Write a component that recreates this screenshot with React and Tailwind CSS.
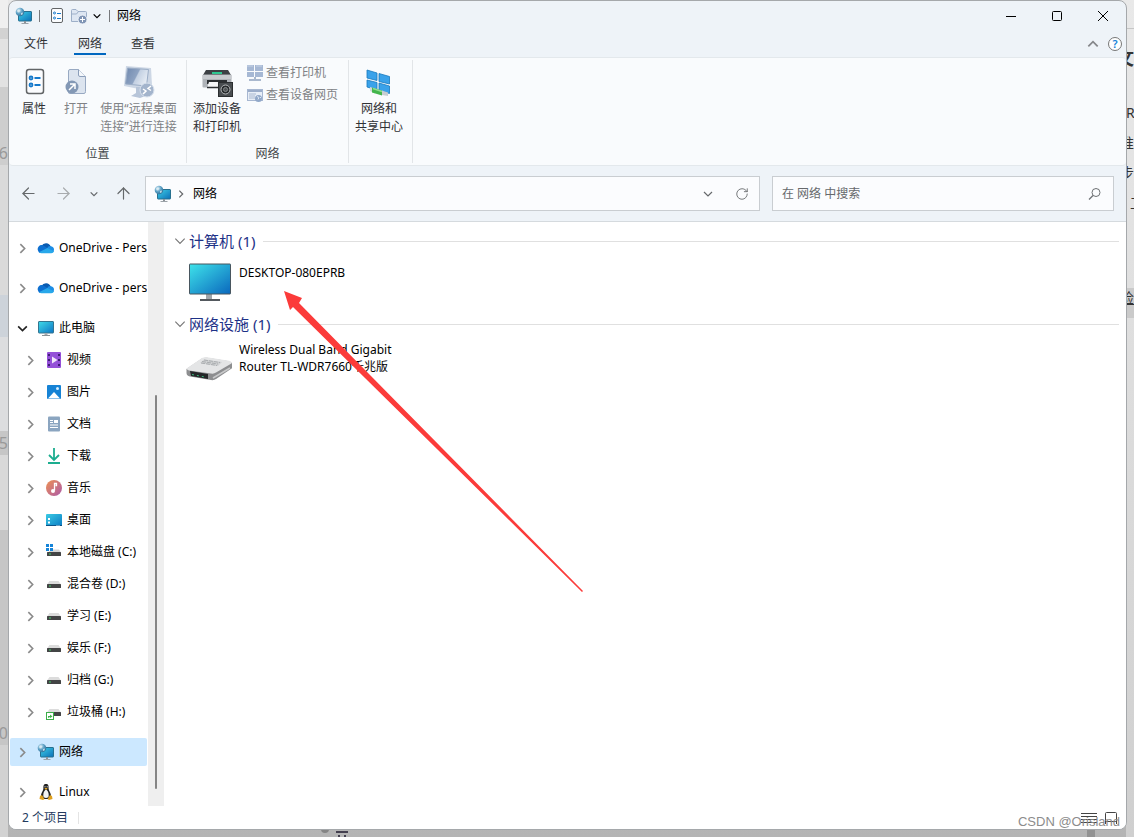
import React from 'react';
import { ArrowLeft, ArrowRight, ArrowUp, RotateCw } from 'lucide-react';

const treeItems = [
    { label: "OneDrive - Personal", icon: CloudIcon, level: 0, pad: "py-1.5" },
    { label: "OneDrive - personal", icon: CloudIcon, level: 0, pad: "py-1.5" },
    { label: "此电脑", icon: PcIcon, level: 0, open: true, pad: "pt-1.5 pb-0.5" },
    { label: "视频", icon: VideoIcon, level: 1 },
    { label: "图片", icon: PictureIcon, level: 1 },
    { label: "文档", icon: DocIcon, level: 1 },
    { label: "下载", icon: DownloadIcon, level: 1 },
    { label: "音乐", icon: MusicIcon, level: 1 },
    { label: "桌面", icon: DesktopIcon, level: 1 },
    { label: "本地磁盘 (C:)", icon: SystemDriveIcon, level: 1 },
    { label: "混合卷 (D:)", icon: DriveIcon, level: 1 },
    { label: "学习 (E:)", icon: DriveIcon, level: 1 },
    { label: "娱乐 (F:)", icon: DriveIcon, level: 1 },
    { label: "归档 (G:)", icon: DriveIcon, level: 1 },
    { label: "垃圾桶 (H:)", icon: LinkedDriveIcon, level: 1 },
    { label: "网络", icon: NetworkIcon, level: 0, selected: true, pad: "pt-2.5 pb-1.5" },
    { label: "Linux", icon: LinuxIcon, level: 0, pad: "pt-1.5" },
];

const sections = [
    { title: "计算机 (1)", lines: ["DESKTOP-080EPRB"], icon: ComputerIcon, textClass: "pt-1.5" },
    { title: "网络设施 (1)", lines: ["Wireless Dual Band Gigabit", "Router TL-WDR7660千兆版"], icon: RouterIcon, textClass: "pt-0" },
];

const chevronPaths = {
    right: "M4 2l4 4-4 4",
    down: "M2 4l4 4 4-4",
    up: "M2 8l4-4 4 4",
};

function Chevron({ dir, size = 12, width = 1.5, className = "" }) {
    return (
        <svg width={size} height={size} viewBox="0 0 12 12" fill="none" stroke="currentColor" strokeWidth={width} className={`shrink-0 ${className}`}>
            <path d={chevronPaths[dir]} />
        </svg>
    );
}

function NetworkIcon() {
    return (
        <svg width="18" height="18" viewBox="0 0 18 18" className="shrink-0">
            <defs>
                <linearGradient id="net" x1="0" y1="0" x2="1" y2="1">
                    <stop offset="0" stopColor="#3fd0e6" />
                    <stop offset="1" stopColor="#0b6fb8" />
                </linearGradient>
                <radialGradient id="globe" cx="0.35" cy="0.3" r="0.8">
                    <stop offset="0" stopColor="#d5eaf5" />
                    <stop offset="0.5" stopColor="#5b9fc4" />
                    <stop offset="1" stopColor="#28688f" />
                </radialGradient>
            </defs>
            <rect x="3.5" y="4.5" width="13" height="9.5" rx="0.5" fill="url(#net)" stroke="#27708f" />
            <path d="M10 14v2" stroke="#8b9299" strokeWidth="2" />
            <path d="M6.5 16.5h7" stroke="#9ca3a9" />
            <circle cx="5" cy="5" r="4.3" fill="url(#globe)" />
            <path d="M2 3.5l2-1 1.5 1L4 5.5 2.5 5zM6 6l2-.5-.5 2L6 8z" fill="#dcecf3" opacity="0.8" />
        </svg>
    );
}

function PcIcon() {
    return (
        <svg width="18" height="18" viewBox="0 0 18 18" className="shrink-0">
            <defs>
                <linearGradient id="pc" x1="0" y1="0" x2="1" y2="1">
                    <stop offset="0" stopColor="#3fdbe8" />
                    <stop offset="1" stopColor="#0d74c4" />
                </linearGradient>
            </defs>
            <rect x="1.5" y="2.5" width="15" height="11.5" rx="0.5" fill="url(#pc)" stroke="#34758f" />
            <path d="M9 14v2" stroke="#a5abb0" strokeWidth="3" />
            <path d="M5 16.5h8" stroke="#8a9196" />
        </svg>
    );
}

function CloudIcon() {
    return (
        <svg width="18" height="18" viewBox="0 0 18 18" className="shrink-0">
            <path d="M4.5 7A5 5 0 0 1 13.7 7.5L9 11z" fill="#0a5bb0" />
            <path d="M1.2 12A4 4 0 0 1 6 6.3L12 10 3 14Q1.5 13.5 1.2 12z" fill="#0d6fd0" />
            <path d="M10 9.5A3.6 3.6 0 0 1 17 10.8L16.5 13 11 12z" fill="#1b8de6" />
            <path d="M2 13.3L10.3 9l6.6 3.2Q16.5 14.2 14.3 14.2H4.5Q3 14.2 2 13.3z" fill="#28a8ea" />
        </svg>
    );
}

function VideoIcon() {
    return (
        <svg width="18" height="18" viewBox="0 0 18 18" className="shrink-0">
            <rect x="2" y="1" width="14" height="16" rx="1" fill="#9450d8" />
            <path d="M4 3v13M14 3v13" stroke="#3f1e76" strokeWidth="2" strokeDasharray="2 3" />
            <path d="M7 5.5l5.5 3.5L7 12.5z" fill="#f1e7fb" />
        </svg>
    );
}

function PictureIcon() {
    return (
        <svg width="18" height="18" viewBox="0 0 18 18" className="shrink-0">
            <rect x="2" y="2" width="14" height="14" rx="1" fill="#1683d5" />
            <path d="M3 15.5l6-6.5 6 6.5z" fill="#fff" />
            <circle cx="12.5" cy="5.5" r="1.5" fill="#d7efff" />
        </svg>
    );
}

function DocIcon() {
    return (
        <svg width="18" height="18" viewBox="0 0 18 18" className="shrink-0">
            <rect x="3" y="1.5" width="12" height="15" rx="1" fill="#8ba5c0" />
            <path d="M5 5.5h3M5 7.5h3M5 10h8M5 12.5h8" stroke="#fff" />
            <rect x="9" y="5" width="4" height="3" fill="#fff" />
        </svg>
    );
}

function DownloadIcon() {
    return (
        <svg width="18" height="18" viewBox="0 0 18 18" className="shrink-0" fill="none" stroke="#1cad8f" strokeWidth="1.8">
            <path d="M9 1v12M4 8l5 5 5-5M3 16h12" />
        </svg>
    );
}

function MusicIcon() {
    return (
        <svg width="18" height="18" viewBox="0 0 18 18" className="shrink-0">
            <defs>
                <linearGradient id="music" x1="0" y1="0" x2="1" y2="1">
                    <stop offset="0" stopColor="#ee9152" />
                    <stop offset="1" stopColor="#ac5aaa" />
                </linearGradient>
            </defs>
            <circle cx="9" cy="9" r="8" fill="url(#music)" />
            <path d="M9.5 11.5V4.5h2v2h-1" stroke="#fff" strokeWidth="1.3" fill="none" />
            <circle cx="8" cy="12" r="2" fill="#fff" />
        </svg>
    );
}

function DesktopIcon() {
    return (
        <svg width="18" height="18" viewBox="0 0 18 18" className="shrink-0">
            <defs>
                <linearGradient id="desk" x1="0" y1="0" x2="1" y2="1">
                    <stop offset="0" stopColor="#3bcbe4" />
                    <stop offset="1" stopColor="#0b7cc4" />
                </linearGradient>
            </defs>
            <rect x="1" y="3" width="16" height="12" rx="1" fill="url(#desk)" />
            <path d="M3 7h2v2H3zM3 10.5h2v2H3z" fill="#fff" />
            <path d="M1 14.5h16" stroke="#0b5286" />
            <path d="M11.5 14.5h4" stroke="#cfe9f5" strokeDasharray="1 1" />
        </svg>
    );
}

function DriveIcon() {
    return (
        <svg width="18" height="18" viewBox="0 0 18 18" className="shrink-0">
            <path d="M4.5 6h9l2.5 3.5H2z" fill="#dcdcdc" />
            <rect x="2" y="9" width="14" height="4" rx="0.5" fill="#434445" />
            <path d="M4 11h2" stroke="#45d06a" />
        </svg>
    );
}

function SystemDriveIcon() {
    return (
        <svg width="18" height="18" viewBox="0 0 18 18" className="shrink-0">
            <path d="M6 6.5h8l2 3H3z" fill="#d5d5d5" />
            <rect x="2" y="9" width="14" height="4" rx="0.5" fill="#434445" />
            <path d="M4 11h2" stroke="#45d06a" />
            <path d="M1 1h3v3H1zM5 1h3v3H5zM1 5h3v3H1zM5 5h3v3H5z" fill="#1684d8" />
        </svg>
    );
}

function LinkedDriveIcon() {
    return (
        <svg width="18" height="18" viewBox="0 0 18 18" className="shrink-0">
            <path d="M4.5 6h9l2.5 3.5H2z" fill="#dcdcdc" />
            <rect x="2" y="9" width="14" height="4" rx="0.5" fill="#434445" />
            <rect x="1.5" y="9.5" width="7" height="7" fill="#fff" stroke="#3dae49" />
            <path d="M3 15v-2h2v-1.5l2.5 2L5 15v-1z" fill="#3dae49" />
        </svg>
    );
}

function LinuxIcon() {
    return (
        <svg width="18" height="18" viewBox="0 0 18 18" className="shrink-0">
            <path d="M9 1C6.5 1 6.3 3 6.4 5.5 6.4 7.5 3.5 10.5 4 14l3 2h4l3-2C14.5 10.5 11.6 7.5 11.6 5.5 11.7 3 11.5 1 9 1z" fill="#222" />
            <path d="M9 6.5c-2 1-3.2 4.5-2.5 7.5q2.5 2 5 0c.7-3-.5-6.5-2.5-7.5z" fill="#f3f3f3" />
            <path d="M7.3 5h3.4L9 7z" fill="#e8aa24" />
            <path d="M7.5 3.8h1M9.7 3.8h1" stroke="#fff" />
            <path d="M3 13l2-1 2.5 4-1.5 1-3.5-1zM15 13l-2-1-2.5 4 1.5 1 3.5-1z" fill="#dfa01e" />
        </svg>
    );
}

function ComputerIcon() {
    return (
        <svg width="48" height="48" viewBox="0 0 48 48" className="shrink-0">
            <defs>
                <linearGradient id="computer" x1="0" y1="0" x2="1" y2="1">
                    <stop offset="0" stopColor="#3ee3ea" />
                    <stop offset="1" stopColor="#0a67bd" />
                </linearGradient>
            </defs>
            <path d="M21 36h6v5h-6z" fill="#a0a6ab" />
            <path d="M15 41h20v2H15z" fill="#54595e" />
            <rect x="4.5" y="6" width="41" height="30" rx="0.5" fill="url(#computer)" stroke="#49565f" />
        </svg>
    );
}

function RouterIcon() {
    return (
        <svg width="48" height="48" viewBox="0 0 48 48" className="shrink-0">
            <path d="M1.5 28L17 17.5q2-1 5-.7l22 3.5q3.5 1 3 4v3L31 38q-2 1.500-5 1L5 35.500q-3.500-1-3.500-3.500z" fill="#8d8e90" />
            <path d="M1.5 27.5L17 17q2-1 5-.7l22 3.5q3.5 1 2 3L31 31.5q-2 1.500-5 1L4 29.500q-2-.5-2.500-2z" fill="#e4e5e6" />
            <path d="M15 22l4-3.5 18 2.5-4 4z" fill="#d0d2d3" />
            <path d="M17 20.5l16 2.5M19 19l16 2.5M16 22l16 2.5" stroke="#aaadb0" strokeDasharray="4 1" />
            <path d="M5 30l18 3v5L6 35z" fill="#242628" />
            <path d="M7 33.5l13 2.5" stroke="#36b478" strokeDasharray="2 3" />
            <path d="M28 37l17-10" stroke="#c8c9ca" strokeWidth="1.5" />
        </svg>
    );
}

function PropertiesIcon() {
    return (
        <svg width="32" height="32" viewBox="0 0 32 32" className="shrink-0">
            <rect x="8.5" y="3.5" width="17" height="24" rx="2.5" fill="#fbfcfe" stroke="#626567" strokeWidth="1.5" />
            <g fill="none" stroke="#1579cb" strokeWidth="1.8">
                <circle cx="13" cy="12" r="1.5" />
                <circle cx="13" cy="19" r="1.5" />
                <path d="M16.500 12h6M16.500 19h6" />
            </g>
        </svg>
    );
}

function SmallPropertiesIcon() {
    return (
        <svg width="14" height="18" viewBox="0 0 14 18" className="shrink-0">
            <rect x="1.5" y="1.5" width="11" height="14" rx="1.5" fill="#fbfcfe" stroke="#626567" />
            <g fill="none" stroke="#1579cb">
                <circle cx="4.5" cy="6" r="1" />
                <circle cx="4.5" cy="11" r="1" />
                <path d="M7 6.5h4M7 11.5h4" />
            </g>
        </svg>
    );
}

function NewFolderIcon() {
    return (
        <svg width="18" height="18" viewBox="0 0 18 18" className="shrink-0">
            <path d="M1.5 14.5V3.5q0-1 1-1H6l2 2h7.5q1 0 1 1v9z" fill="#dde6f2" stroke="#9dafc8" />
            <path d="M1.5 7H6.5L8.5 4.5" fill="none" stroke="#9dafc8" />
            <circle cx="12.5" cy="12.5" r="4.5" fill="#8095b5" stroke="#eef3f9" />
            <path d="M10 12.5h5M12.5 10v5" stroke="#fff" />
        </svg>
    );
}

function OpenIcon() {
    return (
        <svg width="32" height="32" viewBox="0 0 32 32">
            <path d="M8.5 27V5q0-1.5 1.5-1.5h8.5l7 7V25.5q0 2-1.500 2H10z" fill="#dce4ef" stroke="#98a9c2" />
            <path d="M18.5 3.5v5.5q0 1.5 1.5 1.5h5.5" fill="#f4f7fb" stroke="#8b9eba" />
            <circle cx="12" cy="21" r="6.5" fill="#8398b5" />
            <path d="M9 24l5.5-5.5M10 18h5v5" fill="none" stroke="#fff" strokeWidth="1.5" />
        </svg>
    );
}

function RemoteIcon() {
    return (
        <svg width="32" height="32" viewBox="0 0 32 32">
            <defs>
                <linearGradient id="remote" x1="0" y1="0" x2="1" y2="0.4">
                    <stop offset="0" stopColor="#6f88ae" />
                    <stop offset="0.55" stopColor="#8ea3c2" />
                    <stop offset="0.6" stopColor="#c3d0e2" />
                    <stop offset="1" stopColor="#e3eaf3" />
                </linearGradient>
            </defs>
            <path d="M3 0l25 2 1 17-13 4L1 20z" fill="#cdd7e5" />
            <path d="M4.5 2l21 1.5-2 16.5L2.5 18z" fill="url(#remote)" stroke="#9badc6" />
            <path d="M13 21h6l1 6 5 2-8 3-9-2 5-3z" fill="#b7c5d9" />
            <circle cx="24" cy="24" r="7" fill="#a3b4cc" stroke="#d8e1ed" />
            <path d="M20 23l3 2-3 3M28 20l-3 2.5 3 2" fill="none" stroke="#fff" strokeWidth="1.5" />
        </svg>
    );
}

function PrinterIcon() {
    return (
        <svg width="32" height="32" viewBox="0 0 32 32">
            <path d="M5 4h22l3 5H2z" fill="#3c4044" />
            <path d="M11 7h10" stroke="#2ec791" strokeWidth="2" />
            <rect x="1.5" y="8.5" width="29" height="13" rx="1" fill="#afb3b8" />
            <path d="M1.5 9h29v4h-29z" fill="#c7cace" />
            <path d="M6 14h20v4H6z" fill="#2c2f32" />
            <path d="M8 16h16v6H6z" fill="#f5f6f7" />
            <path d="M6 21.5h12" stroke="#2c2f32" strokeWidth="1.5" />
            <rect x="17.5" y="16.5" width="14" height="14" fill="#494d50" stroke="#2b2e30" />
            <circle cx="24.5" cy="23.5" r="4.5" fill="#292c2e" stroke="#b5b8ba" />
            <circle cx="24.5" cy="23.5" r="2" fill="#505456" stroke="#85898b" />
        </svg>
    );
}

function ViewPrinterIcon() {
    return (
        <svg width="16" height="16" viewBox="0 0 16 16" className="shrink-0">
            <path d="M0 0h7v6H0zM8 0h8v6H8zM0 7h7v5H0zM8 7h8v5H8z" fill="#a6b8d4" />
            <path d="M0 1h6M9 1h6" stroke="#c8d4e6" />
            <path d="M8 12v3M2 15h12" stroke="#a9b8ce" strokeWidth="2" />
        </svg>
    );
}

function WebPageIcon() {
    return (
        <svg width="16" height="16" viewBox="0 0 16 16" className="shrink-0">
            <rect x="0.5" y="2.5" width="15" height="11" fill="#e8eef7" stroke="#a7b7d1" />
            <path d="M1 4h14" stroke="#9badca" strokeWidth="2" />
            <path d="M2 7h7M2 9h6M2 11h6" stroke="#a8b8d0" />
            <circle cx="11.5" cy="11.5" r="3.5" fill="#91a8c9" />
            <path d="M10 9.5l2 1-1 2M13 10l1 1" stroke="#dce6f2" fill="none" />
        </svg>
    );
}

function SharingIcon() {
    return (
        <svg width="32" height="32" viewBox="0 0 32 32">
            <path d="M4 4l10 3v7.500L4 12zM16 7.500l10.500 3v7.500L16 15.500zM4 14l10 2.500v7.500L4 21zM16 17l10.500 3v7.500L16 24.500z" fill="#3aa2ea" stroke="#1878bd" strokeWidth="0.8" />
            <path d="M7 21l5 1.500v5L7 25z" fill="#d4d8db" />
            <path d="M9 21.500l10 3v5L9 26.500z" fill="#43b54c" />
            <path d="M10 22.500l9 3" stroke="#90dc91" strokeWidth="1.5" />
            <path d="M19 24.500l6 2v3.500l-6-1z" fill="#c7cdd1" />
        </svg>
    );
}

function RibbonButton({ icon, lines, disabled, className }) {
    return (
        <button disabled={disabled} className={`flex flex-col items-center ${className} ${disabled ? 'text-[#808285]' : 'text-[#303235]'}`}>
            {icon}
            <span className="pt-0.5 leading-[18px] whitespace-nowrap">
                {lines.map((line) => <span key={line} className="block">{line}</span>)}
            </span>
        </button>
    );
}

function TitleBar() {
    return (
        <header className="flex h-[29px] items-center pl-1.5">
            <NetworkIcon />
            <span className="mx-1.5 h-3 w-px bg-[#77797c]" />
            <button aria-label="属性" className="ml-1"><SmallPropertiesIcon /></button>
            <button aria-label="新建文件夹" className="ml-1.5"><NewFolderIcon /></button>
            <button aria-label="自定义快速访问工具栏" className="ml-1"><Chevron dir="down" size={10} /></button>
            <span className="mx-[7px] h-3 w-px bg-[#77797c]" />
            <h1>网络</h1>
            <div className="ml-auto flex">
                <button aria-label="最小化" className="flex h-[29px] w-[46px] items-center justify-center">
                    <svg width="10" height="10"><path d="M0 5.5h10" stroke="#000" /></svg>
                </button>
                <button aria-label="最大化" className="flex h-[29px] w-[46px] items-center justify-center">
                    <svg width="10" height="10"><rect x="0.5" y="0.5" width="9" height="9" rx="1" fill="none" stroke="#000" /></svg>
                </button>
                <button aria-label="关闭" className="flex h-[29px] w-[46px] items-center justify-center">
                    <svg width="10" height="10"><path d="M0 0l10 10M10 0L0 10" stroke="#000" /></svg>
                </button>
            </div>
        </header>
    );
}

function Ribbon() {
    return (
        <>
            <div className="flex h-[27px] items-stretch text-[#303235]">
                <button className="w-[54px]">文件</button>
                <button className="relative w-[54px]">
                    网络
                    <span className="absolute inset-x-[11px] bottom-0.5 h-0.5 bg-[#0067c0]" />
                </button>
                <button className="w-[52px]">查看</button>
                <div className="ml-auto flex items-center gap-2 pr-1">
                    <button aria-label="最小化功能区" className="text-[#85878a]"><Chevron dir="up" size={14} /></button>
                    <button aria-label="帮助" className="flex size-[14px] items-center justify-center rounded-full border border-[#777] bg-white text-[11px] leading-3 font-semibold text-[#1683d8]">?</button>
                </div>
            </div>
            <div className="flex h-[109px] rounded border-y border-[#e3e8ec] bg-[#f9fbfd] py-0.5">
                <div className="flex w-[178px] flex-col border-r border-[#e2e5e8]">
                    <div className="flex flex-1 pt-1.5">
                        <RibbonButton className="w-[50px]" icon={<PropertiesIcon />} lines={["属性"]} />
                        <RibbonButton className="w-[34px]" icon={<OpenIcon />} lines={["打开"]} disabled />
                        <RibbonButton className="w-[91px]" icon={<RemoteIcon />} lines={["使用“远程桌面", "连接”进行连接"]} disabled />
                    </div>
                    <p className="text-center leading-[18px] text-[#44474a]">位置</p>
                </div>
                <div className="flex w-[162px] flex-col border-r border-[#e2e5e8]">
                    <div className="flex flex-1 pt-1.5">
                        <RibbonButton className="w-[60px]" icon={<PrinterIcon />} lines={["添加设备", "和打印机"]} />
                        <div className="flex flex-col text-[#808285]">
                            <button disabled className="flex h-[22px] items-center gap-[3px] pb-2 whitespace-nowrap"><ViewPrinterIcon />查看打印机</button>
                            <button disabled className="flex h-[22px] items-center gap-[3px] pb-2 whitespace-nowrap"><WebPageIcon />查看设备网页</button>
                        </div>
                    </div>
                    <p className="text-center leading-[18px] text-[#44474a]">网络</p>
                </div>
                <div className="w-[64px] border-r border-[#e2e5e8] pt-1.5">
                    <RibbonButton className="w-[60px]" icon={<SharingIcon />} lines={["网络和", "共享中心"]} />
                </div>
            </div>
        </>
    );
}

function AddressRow() {
    return (
        <div className="flex h-[55px] items-center pr-3 text-[#66696c]">
            <nav className="flex w-[136px] items-center">
                <button aria-label="后退" className="ml-2.5"><ArrowLeft size={19} strokeWidth={1.5} /></button>
                <button aria-label="前进" className="ml-4 text-[#a8abae]"><ArrowRight size={19} strokeWidth={1.5} /></button>
                <button aria-label="最近浏览的位置" className="ml-4"><Chevron dir="down" size={10} /></button>
                <button aria-label="向上" className="ml-[15px]"><ArrowUp size={19} strokeWidth={1.5} /></button>
            </nav>
            <div className="flex h-[35px] flex-[597] items-center border border-[#c9cdd1] bg-[#fbfcfe] px-2">
                <NetworkIcon />
                <Chevron dir="right" size={10} className="ml-1" />
                <a href="#network" className="ml-[7px] text-black">网络</a>
                <button aria-label="以前的位置" className="mr-[21px] ml-auto"><Chevron dir="down" width={1.2} /></button>
                <button aria-label="刷新" className="mr-0.5"><RotateCw size={14} strokeWidth={1.5} /></button>
            </div>
            <label className="ml-3 flex h-[35px] flex-[322] items-center border border-[#c9cdd1] bg-[#fbfcfe] px-[9px]">
                <input aria-label="搜索" placeholder="在 网络 中搜索" className="min-w-0 flex-1 bg-transparent outline-none placeholder:text-[#66696c]" />
                <svg width="18" height="16" viewBox="0 0 18 16" fill="none" stroke="#6d7073">
                    <circle cx="10" cy="6.5" r="4" />
                    <path d="M7 9.500L3 13.500" strokeWidth="1.3" />
                </svg>
            </label>
        </div>
    );
}

function TreeItem({ item }) {
    const Icon = item.icon;
    return (
        <li className={item.pad}>
            <button className={`
                ml-px flex w-[137px] items-center overflow-hidden whitespace-nowrap
                ${item.level === 0 ? 'h-7 pl-1.5' : 'h-8 pl-3.5'}
                ${item.selected ? 'rounded-xs bg-[#cce8ff]' : ''}
            `}>
                <Chevron dir={item.open ? 'down' : 'right'} size={13} className={`mr-2 ${item.open ? 'text-[#222]' : 'text-[#8a8a8a]'}`} />
                <Icon />
                <span className="ml-1">{item.label}</span>
            </button>
        </li>
    );
}

function Sidebar() {
    return (
        <aside className="flex w-[155px] shrink-0">
            <ul className="w-[139px] overflow-hidden pt-1.5">
                {treeItems.map((item, index) => <TreeItem key={index} item={item} />)}
            </ul>
            <div className="flex w-4 justify-center bg-[#efefef] pt-[173px] pb-[17px]">
                <span className="w-0.5 rounded-full bg-[#858585]" />
            </div>
        </aside>
    );
}

function Content() {
    return (
        <main className="min-w-0 flex-1 pt-[7px] pr-[7px] pl-[9px]">
            {sections.map((section) => {
                const Icon = section.icon;
                return (
                    <section key={section.title} className="h-[83px]">
                        <div className="flex h-6 items-center">
                            <Chevron dir="down" size={14} width={1} className="text-[#777]" />
                            <h2 className="mr-2 ml-0.5 text-[15px] text-[#1e3287]">{section.title}</h2>
                            <span className="h-px flex-1 bg-[#e0e0e0]" />
                        </div>
                        <div className="flex gap-1.5 pt-[5px] pl-3">
                            <Icon />
                            <p className={`leading-[17px] whitespace-nowrap ${section.textClass}`}>
                                {section.lines.map((line) => <span key={line} className="block">{line}</span>)}
                            </p>
                        </div>
                    </section>
                );
            })}
        </main>
    );
}

// Parts of the pages that show around the window edges
function Backdrop() {
    return (
        <div aria-hidden="true" className="absolute inset-0 overflow-hidden bg-linear-to-b from-[#e9e9e9] to-[#b4b4b4] text-[#999]">
            <div className="flex h-full w-2 flex-col overflow-hidden">
                <div className="h-7 bg-[#efefef]" />
                <div className="h-[11px] bg-[#d2d2d2]" />
                <div className="h-12 bg-[#e2e2e2]" />
                <div className="flex h-[78px] items-end justify-end bg-[#cecece] text-base">a6</div>
                <div className="h-[130px] bg-[#dadada]" />
                <div className="h-[42px] bg-[#cdd3da]" />
                <div className="h-[94px] bg-[#dcdddf]" />
                <div className="flex h-6 items-center justify-end bg-[#c6c6c6] text-base">e5</div>
                <div className="h-[75px] bg-[#d9d9d9]" />
                <div className="flex h-[215px] items-end justify-end bg-[#c6c6c6] text-base">50</div>
                <div className="flex-1 bg-[#d2d2d2]" />
            </div>
            <div className="absolute inset-y-0 right-0 w-2 overflow-hidden bg-linear-to-b from-[#e9e9e9] to-[#cfcfcf] text-sm text-[#333]">
                <div className="mt-7 flex justify-end border-t border-[#c6c6c6] pt-[19px] text-lg leading-5 font-bold">文</div>
                <div className="pt-[30px] leading-[30px]">
                    <p>R</p>
                    <p className="flex justify-end">准</p>
                    <p className="flex justify-end">步</p>
                    <p className="pl-1">工</p>
                </div>
                <div className="mt-[70px] flex h-[30px] justify-end bg-[#cacaca] leading-5 underline">检</div>
            </div>
            <div className="absolute bottom-0 left-[336px] h-2 w-3 bg-[#b5b5b5] pt-0.5">
                <div className="h-0.5 bg-[#44404f]" />
                <div className="mx-0.5 mt-0.5 flex justify-between"><i className="h-1 w-0.5 bg-[#44404f]" /><i className="h-1 w-0.5 bg-[#44404f]" /></div>
            </div>
            <div className="absolute bottom-1 left-[321px] size-2 rounded-full bg-[#858585]" />
            <div className="absolute bottom-0 left-[1087px] h-2 w-2 bg-[#929292]" />
        </div>
    );
}

const App = () => {
    return (
        <div className="relative flex min-h-screen pr-[7px] pb-[7px] pl-2 font-['Noto_Sans','Noto_Sans_CJK_SC',sans-serif] text-xs text-black">
            <Backdrop />
            <div className="relative flex min-w-0 flex-1 flex-col overflow-hidden rounded-lg border border-[#a5a8ab] bg-[#eef3f8]">
                <TitleBar />
                <Ribbon />
                <AddressRow />
                <div className="flex flex-1 border-t border-[#d5dade] bg-white">
                    <Sidebar />
                    <Content />
                </div>
                <footer className="flex h-[23px] items-center bg-white pl-[13px] text-[#243a5e]">
                    <span>2 个项目</span>
                    <span className="ml-2.5 h-3 w-px bg-[#e4e4e4]" />
                    <div className="ml-auto flex items-center gap-2 pr-2">
                        <button aria-label="详细信息">
                            <svg width="16" height="12"><path d="M0 1.5h16M0 4.5h16M0 7.5h16M0 10.5h16" stroke="#444" /></svg>
                        </button>
                        <button aria-label="大图标">
                            <svg width="13" height="12"><rect x="0.5" y="0.5" width="11" height="9" rx="1" fill="none" stroke="#444" /><path d="M0.5 9v3M11.5 9v3" stroke="#444" /></svg>
                        </button>
                    </div>
                </footer>
            </div>
            <svg width="300" height="302" viewBox="0 0 300 302" className="pointer-events-none absolute top-[291px] left-[284px]">
                <path d="M0 0L18 7 15 12 299 300 298 301 9 16 6 19z" fill="#fb3b3a" />
            </svg>
            <p className="pointer-events-none absolute right-[14px] bottom-[5px] font-['Liberation_Sans',sans-serif] text-[13px] leading-5 text-[#8c8c8c]">CSDN @Orisland</p>
        </div>
    );
};

export default App;
